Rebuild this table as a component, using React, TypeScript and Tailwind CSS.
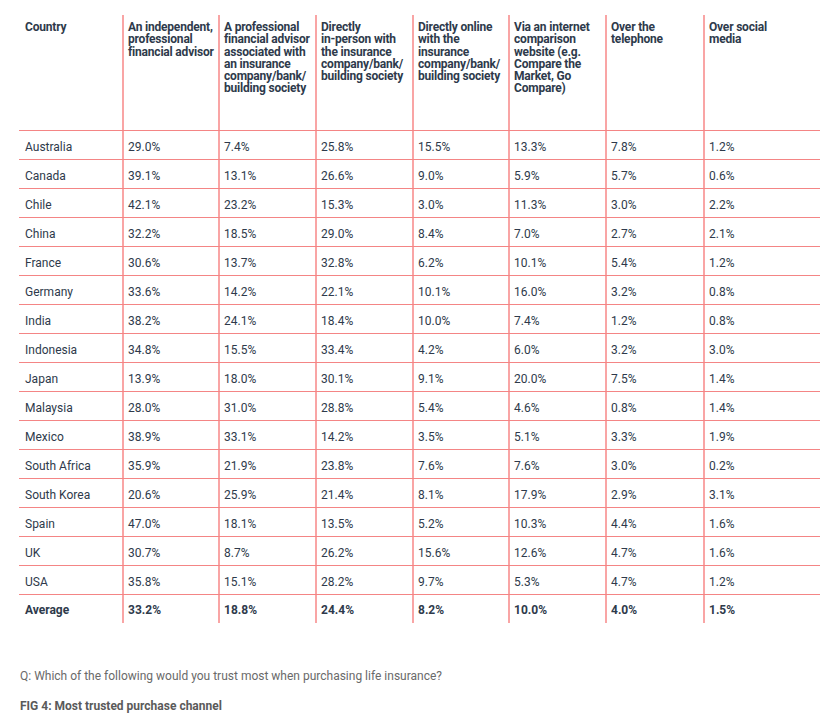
const headers: string[][] = [
  ["Country"],
  ["An independent,", "professional", "financial advisor"],
  ["A professional", "financial advisor", "associated with", "an insurance", "company/bank/", "building society"],
  ["Directly", "in-person with", "the insurance", "company/bank/", "building society"],
  ["Directly online", "with the", "insurance", "company/bank/", "building society"],
  ["Via an internet", "comparison", "website (e.g.", "Compare the", "Market, Go", "Compare)"],
  ["Over the", "telephone"],
  ["Over social", "media"],
];

const rows: [string, ...string[]][] = [
  ["Australia", "29.0%", "7.4%", "25.8%", "15.5%", "13.3%", "7.8%", "1.2%"],
  ["Canada", "39.1%", "13.1%", "26.6%", "9.0%", "5.9%", "5.7%", "0.6%"],
  ["Chile", "42.1%", "23.2%", "15.3%", "3.0%", "11.3%", "3.0%", "2.2%"],
  ["China", "32.2%", "18.5%", "29.0%", "8.4%", "7.0%", "2.7%", "2.1%"],
  ["France", "30.6%", "13.7%", "32.8%", "6.2%", "10.1%", "5.4%", "1.2%"],
  ["Germany", "33.6%", "14.2%", "22.1%", "10.1%", "16.0%", "3.2%", "0.8%"],
  ["India", "38.2%", "24.1%", "18.4%", "10.0%", "7.4%", "1.2%", "0.8%"],
  ["Indonesia", "34.8%", "15.5%", "33.4%", "4.2%", "6.0%", "3.2%", "3.0%"],
  ["Japan", "13.9%", "18.0%", "30.1%", "9.1%", "20.0%", "7.5%", "1.4%"],
  ["Malaysia", "28.0%", "31.0%", "28.8%", "5.4%", "4.6%", "0.8%", "1.4%"],
  ["Mexico", "38.9%", "33.1%", "14.2%", "3.5%", "5.1%", "3.3%", "1.9%"],
  ["South Africa", "35.9%", "21.9%", "23.8%", "7.6%", "7.6%", "3.0%", "0.2%"],
  ["South Korea", "20.6%", "25.9%", "21.4%", "8.1%", "17.9%", "2.9%", "3.1%"],
  ["Spain", "47.0%", "18.1%", "13.5%", "5.2%", "10.3%", "4.4%", "1.6%"],
  ["UK", "30.7%", "8.7%", "26.2%", "15.6%", "12.6%", "4.7%", "1.6%"],
  ["USA", "35.8%", "15.1%", "28.2%", "9.7%", "5.3%", "4.7%", "1.2%"],
];

const average = ["Average", "33.2%", "18.8%", "24.4%", "8.2%", "10.0%", "4.0%", "1.5%"];

const grid =
  "grid grid-cols-[103px_96px_97px_97px_96px_97px_98px_99px]";

function cellClass(i: number) {
  return i === 0 ? "pl-[6px]" : "border-l-2 border-[#f9a5a5] pl-[4px]";
}

export default function App() {
  return (
    <div className="w-[820px] h-[726px] bg-white font-['Roboto',sans-serif] text-[#2e3a4b]">
      <div className="pl-[19px] pt-[15px]">
        {/* header */}
        <div className={`${grid} h-[116px] border-b border-[#f48585]`}>
          {headers.map((lines, i) => (
            <div
              key={i}
              className={`${cellClass(i)} pt-[6px] text-[12px] leading-[12.3px] font-bold tracking-[-0.2px]`}
            >
              {lines.map((l) => (
                <div key={l} className="whitespace-nowrap">
                  {l}
                </div>
              ))}
            </div>
          ))}
        </div>

        {/* body */}
        {rows.map((r) => (
          <div key={r[0]} className={`${grid} h-[29px] border-b border-[#f48585]`}>
            {r.map((v, i) => (
              <div key={i} className={`${cellClass(i)} flex items-center pt-[3px] text-[12px]`}>
                {v}
              </div>
            ))}
          </div>
        ))}

        <div className={`${grid} h-[28px]`}>
          {average.map((v, i) => (
            <div key={i} className={`${cellClass(i)} flex items-center pt-[2px] text-[12px] font-bold`}>
              {v}
            </div>
          ))}
        </div>

        {/* notes */}
        <p className="mt-[44px] pl-[1px] text-[12px] text-[#6a6a6a]">
          Q: Which of the following would you trust most when purchasing life insurance?
        </p>
        <p className="mt-[12px] pl-[1px] text-[12px] font-bold text-[#5a5a5a]">
          FIG 4: Most trusted purchase channel
        </p>
      </div>
    </div>
  );
}
